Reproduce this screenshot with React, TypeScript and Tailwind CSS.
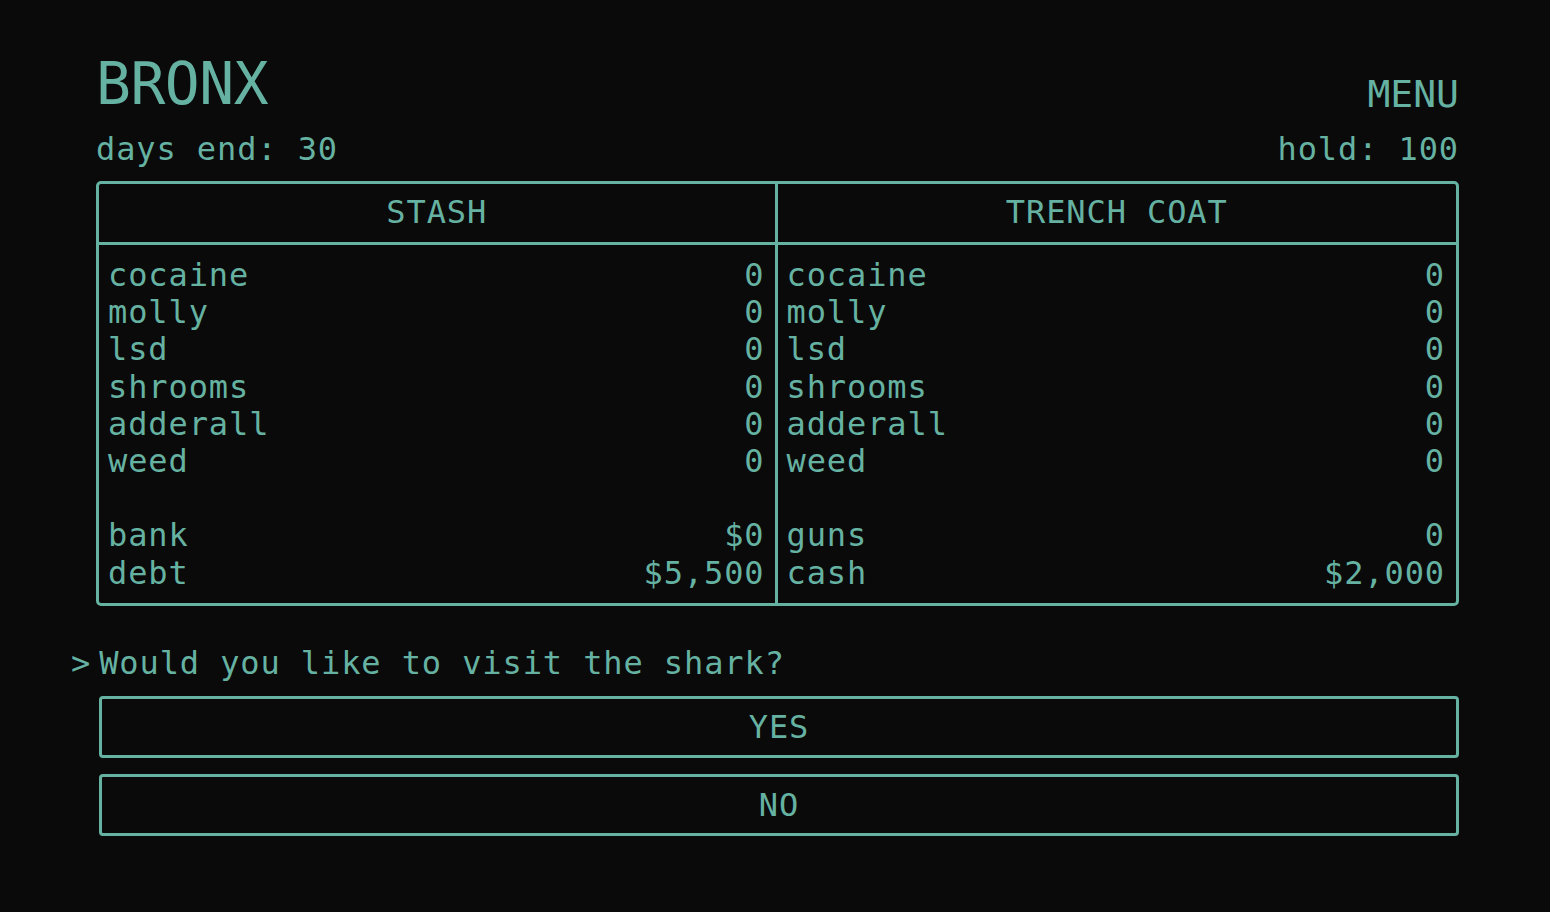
import React from 'react';

const MONO = "font-['DejaVu_Sans_Mono',_'Liberation_Mono',_monospace]";

const drugs = ['cocaine', 'molly', 'lsd', 'shrooms', 'adderall', 'weed'];

function Row({ label, value }: { label: string; value: string }) {
  return (
    <div className="flex justify-between h-[37.2px] leading-[37.2px]">
      <span>{label}</span>
      <span>{value}</span>
    </div>
  );
}

function Column({ title, extra, className }: {
  title: string;
  extra: [string, string][];
  className?: string;
}) {
  return (
    <div className={`flex flex-col ${className ?? ''}`}>
      <div className="h-[61px] pb-[3px] border-b-[3px] border-[#66b2a2] flex items-center justify-center leading-[32px]">
        {title}
      </div>
      <div className="pt-[12px] pb-[11px]">
        {drugs.map(d => <Row key={d} label={d} value="0" />)}
        <div className="h-[37.2px]" />
        {extra.map(([l, v]) => <Row key={l} label={l} value={v} />)}
      </div>
    </div>
  );
}

export default function App() {
  return (
    <div className={`min-h-screen bg-[#0a0a0a] text-[#66b2a2] ${MONO} text-[32px] tracking-[0.9px]`}>
      <div className="pl-[96px] pr-[91px] pt-[55px]">

        {/* Location + menu */}
        <div className="flex justify-between items-end">
          <h1 className="text-[58px] leading-[58px] tracking-[-0.5px]">BRONX</h1>
          <button className="text-[38px] leading-[38px] tracking-normal">MENU</button>
        </div>

        <div className="flex justify-between mt-[20px] leading-[32px]">
          <span>days end: 30</span>
          <span>hold: 100</span>
        </div>

        {/* Inventory table */}
        <div className="mt-[16px] border-[3px] border-[#66b2a2] rounded-[5px] grid grid-cols-2">
          <Column
            title="STASH"
            className="border-r-[3px] border-[#66b2a2] [&>div:last-child]:pl-[9px] [&>div:last-child]:pr-[10px]"
            extra={[['bank', '$0'], ['debt', '$5,500']]}
          />
          <Column
            title="TRENCH COAT"
            className="[&>div:last-child]:pl-[9px] [&>div:last-child]:pr-[11px]"
            extra={[['guns', '0'], ['cash', '$2,000']]}
          />
        </div>

        {/* Prompt */}
        <div className="flex mt-[41px] -ml-[25px] leading-[32px]">
          <span className="mr-[8px]">&gt;</span>
          <span>Would you like to visit the shark?</span>
        </div>

        <div className="ml-[3px] mt-[17px] flex flex-col gap-[16px]">
          {['YES', 'NO'].map(label => (
            <button
              key={label}
              className="h-[62px] border-[3px] border-[#66b2a2] rounded-[4px] flex items-center justify-center leading-[32px]"
            >
              {label}
            </button>
          ))}
        </div>

      </div>
    </div>
  );
}
